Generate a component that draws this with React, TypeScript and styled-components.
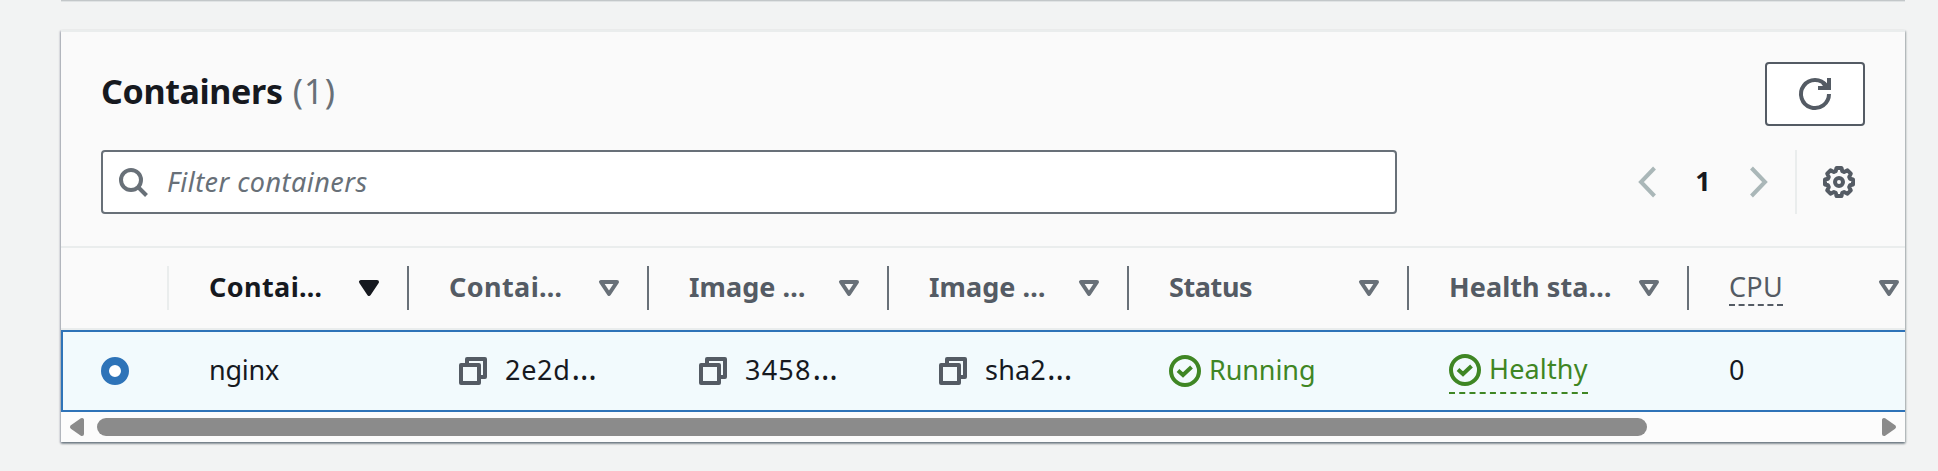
import React from 'react';
import styled, { createGlobalStyle, css } from 'styled-components';

const colors = {
  page: '#f2f3f3',
  surface: '#fafafa',
  line: '#eaeded',
  text: '#16191f',
  muted: '#545b64',
  subtle: '#687078',
  disabled: '#aab7b8',
  link: '#2e73b8',
  success: '#3f8624',
};

const GlobalStyle = createGlobalStyle`
  * { box-sizing: border-box; }
  body {
    margin: 0;
    height: 471px;
    overflow: hidden;
    background: ${colors.page};
    color: ${colors.text};
    font: 27px/44px "Noto Sans", "Open Sans", sans-serif;
  }
  svg { display: block; flex: none; overflow: visible; }
`;

const Page = styled.main`
  display: flex;
  flex-direction: column;
  gap: 30px;
  width: 1938px;
  height: 471px;
  padding: 0 33px 0 61px;
`;

const PreviousCard = styled.div`
  height: 1px;
  margin: 0 0 -1px;
  background: #c3c7c9;
  box-shadow: 0 1px 0 #e0e3e4;
`;

const Card = styled.section`
  display: flex;
  flex-direction: column;
  height: 412px;
  border-top: 2px solid ${colors.line};
  background: ${colors.surface};
  box-shadow: 0 2px 2px rgba(0, 28, 36, 0.3), 1px 1px 2px rgba(0, 28, 36, 0.25),
    -1px 1px 2px rgba(0, 7, 50, 0.25);
`;

const CardHeader = styled.header`
  display: flex;
  justify-content: space-between;
  align-items: flex-start;
  height: 118px;
  padding: 30px 40px 0;
`;

const Title = styled.h2`
  display: flex;
  gap: 10px;
  margin: -7px 0 0;
  font-size: 34px;
  line-height: 72px;
  font-weight: 700;
  letter-spacing: -0.35px;
`;

const Count = styled.span`
  color: ${colors.subtle};
  font-weight: 400;
  letter-spacing: 1.2px;
`;

const RefreshButton = styled.button`
  display: flex;
  align-items: center;
  justify-content: center;
  width: 100px;
  height: 64px;
  padding: 0;
  border: 2px solid ${colors.muted};
  border-radius: 4px;
  background: #fff;
  color: ${colors.muted};
`;

const Toolbar = styled.div`
  display: flex;
  justify-content: space-between;
  height: 96px;
  padding: 0 40px 0;
`;

const SearchBox = styled.label`
  display: flex;
  align-items: center;
  gap: 18px;
  width: 1296px;
  height: 64px;
  padding-left: 14px;
  border: 2px solid ${colors.subtle};
  border-radius: 4px;
  background: #fff;
  color: ${colors.subtle};
`;

const Placeholder = styled.span`
  font-style: italic;
  letter-spacing: 0.45px;
  line-height: 60px;
  height: 60px;
`;

const Controls = styled.div`
  display: flex;
  align-items: center;
  height: 64px;
`;

const Pager = styled.nav`
  display: flex;
  align-items: center;
  gap: 37px;
  height: 64px;
  padding-right: 27px;
  border-right: 2px solid ${colors.line};
  color: ${colors.disabled};
`;

const PageNumber = styled.span`
  width: 20px;
  margin-top: -2px;
  color: ${colors.text};
  font-weight: 700;
  text-align: center;
`;

const SettingsButton = styled.button`
  display: flex;
  margin: 0;
  padding: 0 10px 0 26px;
  border: 0;
  background: none;
  color: ${colors.muted};
`;

const Grid = styled.div<{ $first: number }>`
  display: grid;
  grid-template-columns: ${({ $first }) => $first}px repeat(4, 240px) repeat(2, 280px) 1fr;
`;

const HeaderRow = styled(Grid)`
  height: 84px;
  padding-top: 18px;
  border-top: 2px solid ${colors.line};
  border-bottom: 2px solid ${colors.line};
  color: ${colors.muted};
  font-weight: 700;
`;

const HeaderCell = styled.div<{ $active?: boolean; $divider?: 'light' | 'dark' | 'none' }>`
  display: flex;
  align-items: center;
  justify-content: space-between;
  height: 44px;
  padding: 0 ${({ $divider }) => ($divider === 'none' ? 4 : 28)}px 0 40px;
  border-right: 2px solid
    ${({ $divider = 'dark' }) =>
      ({ light: colors.line, dark: colors.subtle, none: 'transparent' })[$divider]};
  color: ${({ $active }) => ($active ? colors.text : colors.muted)};
  white-space: pre;
`;

const HeaderText = styled.span<{ $spacing?: number }>`
  margin-top: -3px;
  letter-spacing: ${({ $spacing = 0 }) => $spacing}px;
`;

const MetricName = styled.span`
  height: 34px;
  margin-top: 2px;
  border-bottom: 2px dashed ${colors.muted};
  font-weight: 400;
  letter-spacing: 0.3px;
  line-height: 30px;
`;

const SelectedRow = styled(Grid)`
  height: 82px;
  border: 2px solid ${colors.link};
  border-right: 0;
  background: #f2fafd;
`;

const Cell = styled.div<{ $inset?: number }>`
  display: flex;
  align-items: center;
  height: 78px;
  padding-left: ${({ $inset = 40 }) => $inset}px;
  white-space: pre;
`;

const CellText = styled.span<{ $spacing?: number }>`
  height: 44px;
  margin-top: -2px;
  letter-spacing: ${({ $spacing = 0 }) => $spacing}px;
`;

const Ellipsis = styled.span`
  margin-left: 1px;
  font-size: 32px;
  line-height: 1px;
`;

const CopyLabel = styled.div`
  display: flex;
  align-items: center;
  gap: 17px;
  color: ${colors.muted};

  ${CellText} { color: ${colors.text}; }
`;

const Status = styled.div<{ $dashed?: boolean }>`
  display: flex;
  align-items: center;
  gap: 8px;
  color: ${colors.success};
  ${({ $dashed }) =>
    $dashed &&
    css`
      height: 43px;
      margin-top: 3px;
      padding-bottom: 3px;
      border-bottom: 2px dashed ${colors.success};
    `}
`;

const Radio = styled.span`
  width: 28px;
  height: 28px;
  border: 8px solid ${colors.link};
  border-radius: 50%;
  background: #fff;
`;

const ScrollBar = styled.div`
  display: flex;
  align-items: center;
  height: 30px;
  padding: 0 9px;
  background: #fcfcfc;
  color: #8b8b8b;
`;

const ScrollTrack = styled.div`
  flex: 1;
  padding: 0 13px;
`;

const ScrollThumb = styled.div`
  width: 1550px;
  height: 18px;
  border-radius: 9px;
  background: #8b8b8b;
`;

const RefreshIcon = () => (
  <svg width="32" height="32" viewBox="0 0 32 32" fill="none" stroke="currentColor" strokeWidth="4">
    <path d="M30 16a14 14 0 1 1-2.6-8.1" />
    <path d="M19 10h11V0" />
    <path d="M24 5l4 4" />
  </svg>
);

const SearchIcon = () => (
  <svg width="32" height="32" viewBox="0 0 32 32" fill="none" stroke="currentColor" strokeWidth="4">
    <circle cx="14" cy="14" r="10" />
    <path d="M21 21l8.5 8.5" />
  </svg>
);

const Chevron = ({ flip }: { flip?: boolean }) => (
  <svg width="18" height="32" viewBox="0 0 18 32" fill="none" stroke="currentColor" strokeWidth="4">
    <path d={flip ? 'M1.5 2l13.5 14L1.5 30' : 'M16.5 2L3 16l13.5 14'} />
  </svg>
);

const GearIcon = () => (
  <svg width="32" height="32" viewBox="0 0 32 32" fill="none" stroke="currentColor" strokeWidth="4" strokeLinejoin="round">
    <path d="M13.5 2h5l.8 3.2 1.8.8 3.4-1.6 3.3 3.3L26.2 11l.8 1.8 3 .7v5l-3 .8-.8 1.8 1.6 3.3-3.3 3.3-3.4-1.7-1.8.8-.8 3.2h-5l-.8-3.2-1.8-.8-3.4 1.7-3.3-3.3 1.6-3.3-.8-1.8-3-.8v-5l3-.7.8-1.8-1.6-3.3 3.3-3.3L10.900 6l1.800-.8z" />
    <circle cx="16" cy="16" r="4" />
  </svg>
);

const SortIcon = ({ filled }: { filled?: boolean }) => (
  <svg width="20" height="16" viewBox="0 0 20 16" stroke={filled ? colors.text : colors.subtle} strokeWidth="4" strokeLinejoin="round" fill={filled ? colors.text : 'none'}>
    <path d="M2 2h16L10 14z" />
  </svg>
);

const CopyIcon = () => (
  <svg width="29" height="28" viewBox="0 0 29 28" fill="none" stroke="currentColor" strokeWidth="4" strokeLinejoin="round">
    <path d="M2 8h18v18H2z" />
    <path d="M8 8V2h18v18h-6" />
  </svg>
);

const CheckIcon = () => (
  <svg width="32" height="32" viewBox="0 0 32 32" fill="none" stroke="currentColor" strokeWidth="4">
    <circle cx="16" cy="16" r="14" />
    <path d="M9 15.5l5 4.5 8.5-8" />
  </svg>
);

const ScrollArrow = ({ right }: { right?: boolean }) => (
  <svg width="14" height="18" viewBox="0 0 14 18" fill="currentColor" stroke="currentColor" strokeWidth="4" strokeLinejoin="round">
    <path d={right ? 'M2 2v14l10-7z' : 'M12 2v14L2 9z'} />
  </svg>
);

const columns = [
  { label: 'Contai…', active: true, spacing: 0.4 },
  { label: 'Contai…', spacing: 0.4 },
  { label: 'Image …', spacing: 0.05 },
  { label: 'Image …', spacing: 0.05 },
  { label: 'Status', spacing: -0.4 },
  { label: 'Health sta…', spacing: 0.08 },
];

const identifiers = [
  { id: '2e2d', spacing: 0.7 },
  { id: '3458', spacing: 1.2 },
  { id: 'sha2', spacing: 0.2 },
];

export default function App() {
  return (
    <>
      <GlobalStyle />
      <Page>
        <PreviousCard />
        <Card>
          <CardHeader>
            <Title>
              Containers <Count>(1)</Count>
            </Title>
            <RefreshButton aria-label="Refresh">
              <RefreshIcon />
            </RefreshButton>
          </CardHeader>
          <Toolbar>
            <SearchBox>
              <SearchIcon />
              <Placeholder>Filter containers</Placeholder>
            </SearchBox>
            <Controls>
              <Pager>
                <Chevron />
                <PageNumber>1</PageNumber>
                <Chevron flip />
              </Pager>
              <SettingsButton aria-label="Preferences">
                <GearIcon />
              </SettingsButton>
            </Controls>
          </Toolbar>
          <HeaderRow $first={108}>
            <HeaderCell $divider="light" />
            {columns.map((column, index) => (
              <HeaderCell key={index} $active={column.active}>
                <HeaderText $spacing={column.spacing}>{column.label}</HeaderText>
                <SortIcon filled={column.active} />
              </HeaderCell>
            ))}
            <HeaderCell $divider="none">
              <MetricName>CPU</MetricName>
              <SortIcon />
            </HeaderCell>
          </HeaderRow>
          <SelectedRow $first={106}>
            <Cell $inset={38}>
              <Radio />
            </Cell>
            <Cell>
              <CellText $spacing={-0.25}>nginx</CellText>
            </Cell>
            {identifiers.map(({ id, spacing }) => (
              <Cell key={id} $inset={50}>
                <CopyLabel>
                  <CopyIcon />
                  <CellText $spacing={spacing}>
                    {id}
                    <Ellipsis>…</Ellipsis>
                  </CellText>
                </CopyLabel>
              </Cell>
            ))}
            <Cell>
              <Status>
                <CheckIcon />
                <CellText $spacing={-0.1}>Running</CellText>
              </Status>
            </Cell>
            <Cell>
              <Status $dashed>
                <CheckIcon />
                <CellText $spacing={0.15}>Healthy</CellText>
              </Status>
            </Cell>
            <Cell>
              <CellText>0</CellText>
            </Cell>
          </SelectedRow>
          <ScrollBar>
            <ScrollArrow />
            <ScrollTrack>
              <ScrollThumb />
            </ScrollTrack>
            <ScrollArrow right />
          </ScrollBar>
        </Card>
      </Page>
    </>
  );
}
